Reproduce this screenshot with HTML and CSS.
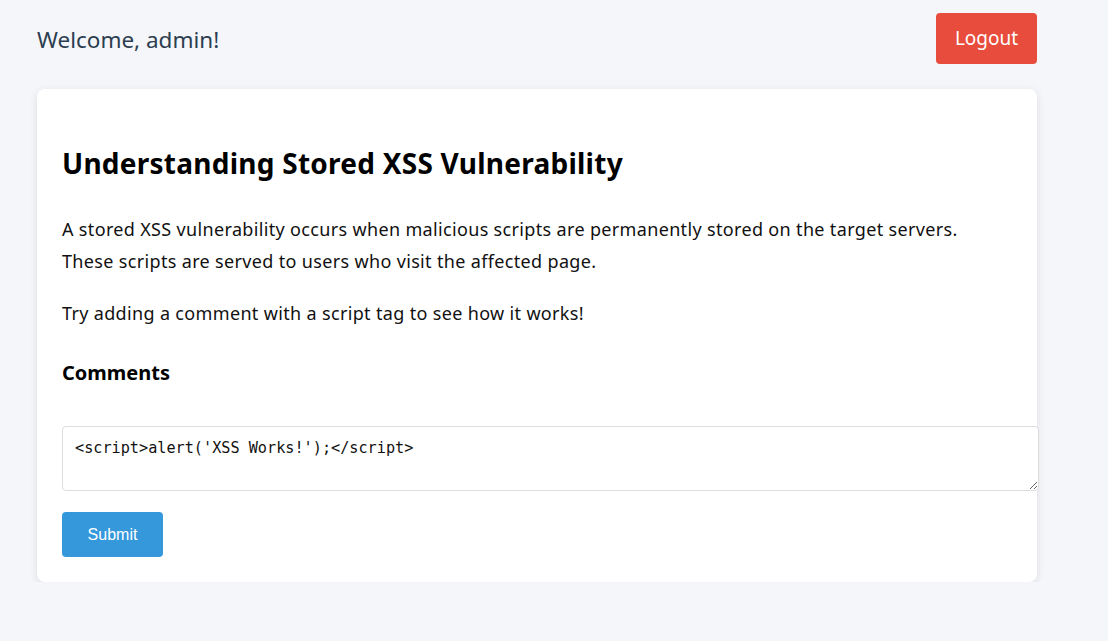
FILE: index.html
```html
<!DOCTYPE html>
<html>
<head>
<meta charset="utf-8">
<link rel="stylesheet" href="styles.css">
</head>
<body>
<div class="page">
  <header class="top">
    <span class="welcome">Welcome, admin!</span>
    <button class="logout">Logout</button>
  </header>
  <main class="card">
    <h2 class="title">Understanding Stored XSS Vulnerability</h2>
    <p class="text">A stored XSS vulnerability occurs when malicious scripts are permanently stored on the target servers. These scripts are served to users who visit the affected page.</p>
    <p class="text">Try adding a comment with a script tag to see how it works!</p>
    <h3 class="sub">Comments</h3>
    <form class="form">
      <textarea class="input">&lt;script&gt;alert('XSS Works!');&lt;/script&gt;</textarea>
      <button type="button" class="submit">Submit</button>
    </form>
  </main>
</div>
</body>
</html>
```
FILE: styles.css
```css
html, body {
  margin: 0;
  padding: 0;
  background: #f5f6fa;
}
body {
  font-family: "Noto Sans", "Open Sans", sans-serif;
  color: #111;
}
.page {
  width: 1000px;
  padding: 12px 0 0 37px;
}
.top {
  display: flex;
  justify-content: space-between;
  align-items: center;
  height: 52px;
  margin-bottom: 25px;
}
.welcome {
  font-size: 22.5px;
  color: #2c3e50;
  position: relative;
  top: 1px;
}
.logout {
  background: #e74c3c;
  color: #fff;
  border: none;
  border-radius: 4px;
  font-family: "Noto Sans", sans-serif;
  font-size: 19px;
  width: 101px;
  height: 51px;
  padding: 0;
}
.card {
  background: #fff;
  border-radius: 8px;
  box-shadow: 0 2px 8px rgba(0,0,0,0.1);
  padding: 25px 25px 25px 25px;
}
.title {
  font-size: 28px;
  letter-spacing: 0.25px;
  font-weight: 700;
  color: #000;
  margin: 30px 0 31px;
}
.text {
  font-size: 18px;
  letter-spacing: 0.34px;
  line-height: 32px;
  margin: 0 0 20px;
}
.sub {
  font-size: 20px;
  font-weight: 700;
  color: #000;
  margin: 30px 0 40px;
}
.form {
  display: flex;
  flex-direction: column;
  align-items: flex-start;
}
.input {
  width: 951px;
  height: 39px;
  padding: 12px;
  border: 1px solid #ddd;
  border-radius: 4px;
  font-family: "DejaVu Sans Mono", monospace;
  font-size: 15.2px;
  color: #111;
  margin: 0 0 21px;
}
.submit {
  background: #3498db;
  color: #fff;
  border: none;
  border-radius: 4px;
  font-family: "Liberation Sans", Arial, sans-serif;
  font-size: 16px;
  width: 101px;
  height: 45px;
  padding: 0;
}
```
